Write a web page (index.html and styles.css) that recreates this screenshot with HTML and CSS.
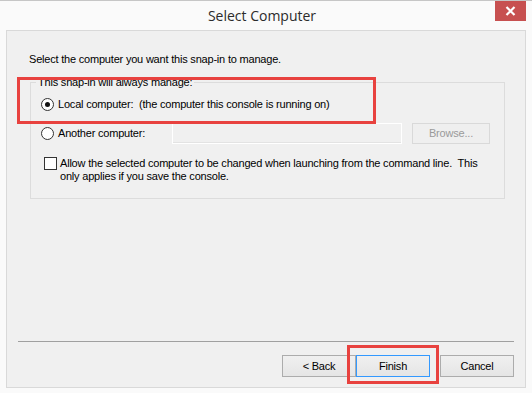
FILE: index.html
```html
<!DOCTYPE html>
<html lang="en">
<head>
    <meta charset="UTF-8">
    <meta name="viewport" content="width=device-width, initial-scale=1.0">
    <title>Select Computer</title>
    <link rel="stylesheet" href="styles.css">
</head>
<body>
    <div class="window">
        <div class="titlebar">
            <span></span>
            <h1 class="title">Select Computer</h1>
            <span class="close">
                <svg width="11" height="10" viewBox="0 0 11 10"><path d="M1.5 1 L9.5 9 M9.5 1 L1.5 9" stroke="#fff" stroke-width="2.2"/></svg>
            </span>
        </div>
        <div class="client">
            <p class="intro">Select the computer you want this snap-in to manage.</p>
            <fieldset class="group">
                <legend>This snap-in will always manage:</legend>
                <div class="option">
                    <span class="radio checked"></span>
                    <span class="option-label">Local computer:&nbsp; (the computer this console is running on)</span>
                </div>
                <div class="option second">
                    <span class="radio"></span>
                    <span class="option-label fixed">Another computer:</span>
                    <span class="textbox"></span>
                    <span class="btn disabled">Browse...</span>
                </div>
                <div class="check-row">
                    <span class="checkbox"></span>
                    <span class="check-label">Allow the selected computer to be changed when launching from the command line.&nbsp; This<br>only applies if you save the console.</span>
                </div>
            </fieldset>
            <div class="spacer"></div>
            <div class="separator"></div>
            <div class="buttons">
                <span class="btn">&lt; Back</span>
                <span class="btn default">Finish</span>
                <span class="btn cancel">Cancel</span>
            </div>
        </div>
        <div class="mark mark-local"></div>
        <div class="mark mark-finish"></div>
    </div>
</body>
</html>
```

FILE: styles.css
```css
body { margin: 0; background: #fafafa; font-family: "Liberation Sans", Arial, sans-serif; font-size: 11px; letter-spacing: -0.2px; color: #000; }
.window { position: relative; height: 393px; box-sizing: border-box; border-top: 1px solid #c6c6c6; display: flex; flex-direction: column; }
.titlebar { height: 29px; display: grid; grid-template-columns: 1fr auto 1fr; align-items: center; padding-right: 8px; }
.title { margin: 0; font-family: "Open Sans", sans-serif; font-weight: normal; font-size: 14px; letter-spacing: 0; color: #2b2b2b; }
.close { justify-self: end; align-self: start; width: 31px; height: 20px; margin-right: -2px; background: #c75050; display: flex; align-items: center; justify-content: center; }
.client { height: 358px; box-sizing: border-box; margin: 0 6px; border: 1px solid #d9d9d9; background: #f0f0f0; display: flex; flex-direction: column; padding-bottom: 10px; }
.intro { margin: 0; padding: 22px 0 0 22px; line-height: 13px; }
.group { margin: 10px 20px 0 23px; padding: 4px 10px 15px; border: 1px solid #dcdcdc; }
.group legend { padding: 0 2px; margin-left: -5px; line-height: 13px; }
.option { height: 22px; display: flex; align-items: center; }
.option.second { margin-top: 7px; }
.radio { width: 11px; height: 11px; border: 1px solid #333; border-radius: 50%; background: #fff; display: flex; align-items: center; justify-content: center; }
.radio.checked::after { content: ""; width: 5px; height: 5px; border-radius: 50%; background: #111; }
.option-label { margin-left: 4px; }
.option-label.fixed { width: 114px; }
.textbox { width: 228px; height: 19px; border: 1px solid #fff; box-shadow: inset 0 -1px 0 #e3e3e3; margin-right: 10px; }
.btn { box-sizing: border-box; width: 74px; height: 22px; border: 1px solid #acacac; background: linear-gradient(#f0f0f0, #e5e5e5); display: flex; align-items: center; justify-content: center; }
.btn.disabled { width: 78px; height: 21px; border-color: #d9d9d9; background: #efefef; color: #9a9a9a; }
.btn.default { border-color: #3399ff; }
.btn.cancel { margin-left: 10px; }
.check-row { display: flex; align-items: flex-start; margin-top: 13px; }
.checkbox { flex: none; width: 11px; height: 11px; margin-left: 3px; border: 1px solid #333; background: #fff; }
.check-label { margin-left: 3px; line-height: 13px; white-space: nowrap; }
.spacer { flex: 1; }
.separator { margin: 0 11px 13px; border-top: 1px solid #a0a0a0; }
.buttons { display: flex; justify-content: flex-end; margin-right: 11px; }
.mark { position: absolute; border: 3px solid #e8423f; }
.mark-local { left: 17px; top: 76px; width: 353px; height: 41px; }
.mark-finish { left: 347px; top: 344px; width: 86px; height: 33px; }
```
